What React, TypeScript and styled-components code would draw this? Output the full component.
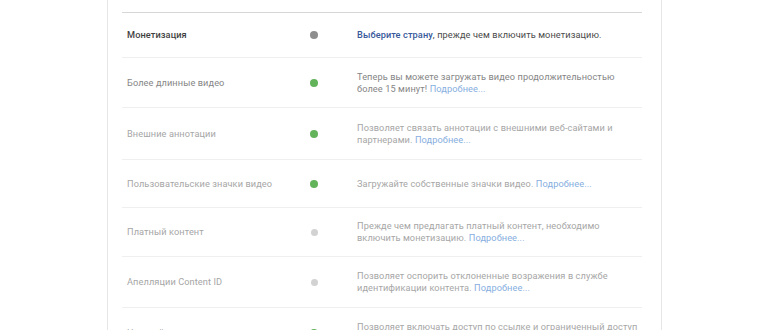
import React from "react";
import styled, { createGlobalStyle } from "styled-components";

const Global = createGlobalStyle`
  html, body { margin: 0; padding: 0; background: #ffffff; }
  body { font-family: Roboto, "Liberation Sans", Arial, sans-serif; }
`;

const Page = styled.div`
  width: 770px;
  height: 330px;
  overflow: hidden;
  background: #fff;
`;

const Panel = styled.div`
  margin-left: 107px;
  width: 520px;
  height: 330px;
  border-left: 1px solid #e6e6e6;
  border-right: 1px solid #e6e6e6;
  padding: 0 19px 0 14px;
  box-sizing: content-box;
  display: flex;
  flex-direction: column;
`;

const HeaderGap = styled.div`
  height: 12px;
  flex-shrink: 0;
  border-bottom: 1px solid #d6d6d6;
`;

type Tone = "strong" | "mid" | "faint";

const Row = styled.div<{ $h: number }>`
  display: grid;
  grid-template-columns: 175px 24px 1fr;
  align-items: center;
  height: ${(p) => p.$h}px;
  padding-left: 5px;
  border-bottom: 1px solid #efefef;
  flex-shrink: 0;
`;

const toneColor = (t: Tone) =>
  t === "strong" ? "#3f3f3f" : t === "mid" ? "#858585" : "#a6a6a6";

const Label = styled.div<{ $tone: Tone }>`
  font-size: 9.2px;
  line-height: 12px;
  color: ${(p) => toneColor(p.$tone)};
  font-weight: ${(p) => (p.$tone === "strong" ? 500 : 400)};
  letter-spacing: 0.1px;
`;

const DotCell = styled.div`
  display: flex;
  justify-content: center;
  align-items: center;
`;

type DotKind = "gray" | "green" | "light";

const Dot = styled.span<{ $kind: DotKind }>`
  display: block;
  width: ${(p) => (p.$kind === "light" ? 7 : 8)}px;
  height: ${(p) => (p.$kind === "light" ? 7 : 8)}px;
  border-radius: 50%;
  background: ${(p) =>
    p.$kind === "gray" ? "#8e8e8e" : p.$kind === "green" ? "#62b35a" : "#d2d2d2"};
`;

const Desc = styled.div<{ $tone: Tone }>`
  padding-left: 31px;
  font-size: 9.2px;
  line-height: 12px;
  color: ${(p) => (p.$tone === "strong" ? "#4a4a4a" : toneColor(p.$tone))};
  letter-spacing: 0.1px;
`;

const StrongLink = styled.span`
  color: #37589a;
  font-weight: 500;
`;

const MoreLink = styled.span`
  color: #86aee0;
`;

type Item = {
  label: string;
  tone: Tone;
  dot: DotKind;
  h: number;
  desc: React.ReactNode;
};

const items: Item[] = [
  {
    label: "Монетизация",
    tone: "strong",
    dot: "gray",
    h: 44,
    desc: (
      <>
        <StrongLink>Выберите страну</StrongLink>, прежде чем включить монетизацию.
      </>
    ),
  },
  {
    label: "Более длинные видео",
    tone: "mid",
    dot: "green",
    h: 49,
    desc: (
      <>
        Теперь вы можете загружать видео продолжительностью
        <br />
        более 15 минут! <MoreLink>Подробнее...</MoreLink>
      </>
    ),
  },
  {
    label: "Внешние аннотации",
    tone: "faint",
    dot: "green",
    h: 51,
    desc: (
      <>
        Позволяет связать аннотации с внешними веб-сайтами и
        <br />
        партнерами. <MoreLink>Подробнее...</MoreLink>
      </>
    ),
  },
  {
    label: "Пользовательские значки видео",
    tone: "faint",
    dot: "green",
    h: 47,
    desc: (
      <>
        Загружайте собственные значки видео. <MoreLink>Подробнее...</MoreLink>
      </>
    ),
  },
  {
    label: "Платный контент",
    tone: "faint",
    dot: "light",
    h: 48,
    desc: (
      <>
        Прежде чем предлагать платный контент, необходимо
        <br />
        включить монетизацию. <MoreLink>Подробнее...</MoreLink>
      </>
    ),
  },
  {
    label: "Апелляции Content ID",
    tone: "faint",
    dot: "light",
    h: 50,
    desc: (
      <>
        Позволяет оспорить отклоненные возражения в службе
        <br />
        идентификации контента. <MoreLink>Подробнее...</MoreLink>
      </>
    ),
  },
  {
    label: "Настройки",
    tone: "faint",
    dot: "green",
    h: 49,
    desc: (
      <>
        Позволяет включать доступ по ссылке и ограниченный доступ
        <br />
        к видео. <MoreLink>Подробнее...</MoreLink>
      </>
    ),
  },
];

export default function App() {
  return (
    <Page>
      <Global />
      <Panel>
        <HeaderGap />
        {items.map((it) => (
          <Row key={it.label} $h={it.h}>
            <Label $tone={it.tone}>{it.label}</Label>
            <DotCell>
              <Dot $kind={it.dot} />
            </DotCell>
            <Desc $tone={it.tone}>{it.desc}</Desc>
          </Row>
        ))}
      </Panel>
    </Page>
  );
}
